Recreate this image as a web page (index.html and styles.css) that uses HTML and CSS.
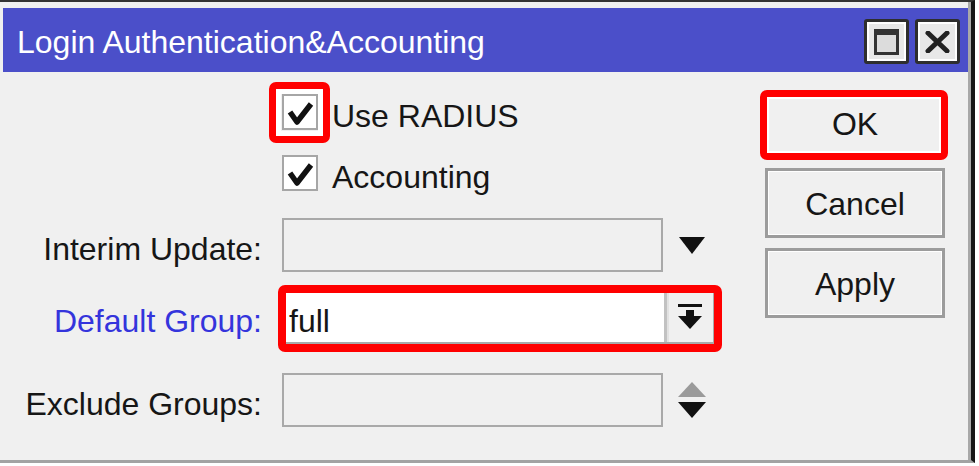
FILE: index.html
```html
<!DOCTYPE html>
<html>
<head>
<meta charset="utf-8">
<title>Login Authentication&amp;Accounting</title>
<link rel="stylesheet" href="styles.css">
</head>
<body>
<div class="window">
  <div class="titlebar">
    <span class="title">Login Authentication&amp;Accounting</span>
    <div class="tb-btns">
      <div class="tb-btn">
        <svg width="25" height="26" viewBox="0 0 25 26"><rect x="1.5" y="1.5" width="22" height="23" fill="#dcdcdc" stroke="#333" stroke-width="3"/><rect x="0" y="0" width="25" height="6" fill="#333"/></svg>
      </div>
      <div class="tb-btn">
        <svg width="25" height="22" viewBox="0 0 25 22"><path d="M3 2 L22 20 M22 2 L3 20" stroke="#222" stroke-width="5" stroke-linecap="round"/></svg>
      </div>
    </div>
  </div>
  <div class="content">
    <div class="form">
      <div class="row check-row">
        <span class="label"></span>
        <span class="checkbox hl hl-check">
          <svg width="32" height="32" viewBox="0 0 32 32"><polyline points="6,16 13,26 27,8" fill="none" stroke="#111" stroke-width="5.5" stroke-linejoin="round"/></svg>
        </span>
        <span class="cb-text">Use RADIUS</span>
      </div>
      <div class="row check-row row2">
        <span class="label"></span>
        <span class="checkbox">
          <svg width="32" height="32" viewBox="0 0 32 32"><polyline points="6,16 13,26 27,8" fill="none" stroke="#111" stroke-width="5.5" stroke-linejoin="round"/></svg>
        </span>
        <span class="cb-text">Accounting</span>
      </div>
      <div class="row field-row row3">
        <span class="label">Interim Update:</span>
        <span class="field"></span>
        <span class="arrow">
          <svg width="30" height="17" viewBox="0 0 30 17"><polygon points="2,0 28,0 15,17" fill="#111"/></svg>
        </span>
      </div>
      <div class="row field-row row4">
        <span class="label label-blue">Default Group:</span>
        <span class="combo hl hl-combo">
          <span class="combo-value">full</span>
          <span class="combo-btn">
            <svg width="24" height="26" viewBox="0 0 24 26"><rect x="0" y="0" width="24" height="3" fill="#111"/><rect x="8" y="6" width="8" height="7" fill="#111"/><polygon points="0,12 24,12 12,25" fill="#111"/></svg>
          </span>
        </span>
      </div>
      <div class="row field-row row5">
        <span class="label">Exclude Groups:</span>
        <span class="field"></span>
        <span class="arrow">
          <svg width="30" height="36" viewBox="0 0 30 36"><polygon points="15,0 29,15 1,15" fill="#9a9a9a"/><polygon points="1,20 29,20 15,36" fill="#111"/></svg>
        </span>
      </div>
    </div>
    <div class="actions">
      <div class="btn btn-ok hl hl-ok">OK</div>
      <div class="btn">Cancel</div>
      <div class="btn">Apply</div>
    </div>
  </div>
</div>
</body>
</html>
```

FILE: styles.css
```css
html, body {
  margin: 0;
  padding: 0;
  background: #ffffff;
}

body {
  font-family: "Liberation Sans", Arial, sans-serif;
  font-size: 32px;
  color: #161616;
}

.window {
  box-sizing: border-box;
  width: 975px;
  height: 463px;
  background: #f0f0f0;
  border-top: 2px solid #333333;
  border-right: 4px solid #151515;
  border-bottom: 3px solid #a3a3a3;
  box-shadow: inset -3px 0 0 #a8a8a8;
  padding: 6px 3px 0 3px;
  display: flex;
  flex-direction: column;
}

.titlebar {
  height: 64px;
  background: #4b4fc9;
  display: flex;
  align-items: center;
  justify-content: space-between;
  padding: 0 8px 0 14px;
}

.title {
  color: #ffffff;
  font-size: 32px;
  line-height: 1;
  padding-top: 3px;
}

.tb-btns {
  display: flex;
  gap: 6px;
  padding-top: 3px;
}

.tb-btn {
  box-sizing: border-box;
  width: 45px;
  height: 45px;
  border: 3px solid #2e2e2e;
  border-radius: 3px;
  background: #e8e8e8;
  box-shadow: inset 0 0 0 2px #ffffff;
  display: flex;
  align-items: center;
  justify-content: center;
}

.content {
  flex: 1;
  display: flex;
}

.form {
  flex: 1;
  display: flex;
  flex-direction: column;
  padding-top: 22px;
}

.row {
  display: flex;
  align-items: center;
}

.check-row {
  height: 36px;
}

.field-row {
  height: 54px;
}

.row2 { margin-top: 25px; }
.row3 { margin-top: 27px; }
.row4 { margin-top: 18px; }
.row5 { margin-top: 29px; }

.label {
  flex: none;
  width: 259px;
  margin-right: 20px;
  text-align: right;
  white-space: nowrap;
  padding-top: 9px;
}

.label-blue {
  color: #3434dc;
}

.checkbox {
  box-sizing: border-box;
  width: 36px;
  height: 36px;
  border: 2px solid #a6a6a6;
  background: #ffffff;
  display: flex;
  align-items: center;
  justify-content: center;
}

.cb-text {
  margin-left: 14px;
  padding-top: 9px;
  white-space: nowrap;
}

.field {
  box-sizing: border-box;
  width: 381px;
  height: 54px;
  border: 2px solid #a9a9a9;
  background: #f0f0f0;
}

.arrow {
  margin-left: 14px;
  display: flex;
}

.combo {
  box-sizing: border-box;
  width: 433px;
  height: 54px;
  border: 2px solid #a9a9a9;
  display: flex;
}

.combo-value {
  flex: 1;
  background: #ffffff;
  padding: 9px 0 0 5px;
  display: flex;
  align-items: center;
}

.combo-btn {
  width: 46px;
  background: #f0f0f0;
  border-left: 3px solid #c2c2c2;
  box-shadow: inset 2px 0 0 #e2e2e2;
  display: flex;
  align-items: center;
  justify-content: center;
}

.actions {
  flex: none;
  width: 180px;
  margin-right: 23px;
  padding-top: 16px;
  display: flex;
  flex-direction: column;
  gap: 10px;
}

.btn {
  box-sizing: border-box;
  height: 70px;
  border: 3px solid #9c9c9c;
  background: #f0f0f0;
  box-shadow: inset 0 0 0 1px #ffffff;
  display: flex;
  align-items: center;
  justify-content: center;
  padding-top: 2px;
}

.btn-ok {
  border-color: transparent;
}

.hl {
  position: relative;
}

.hl::after {
  content: "";
  position: absolute;
  border: 7px solid #ff0000;
  border-radius: 7px;
  pointer-events: none;
}

.hl-check::after {
  top: -14px;
  right: -14px;
  bottom: -15px;
  left: -15px;
  box-shadow: inset 0 0 0 5px #ffffff;
}

.hl-combo::after {
  top: -7px;
  right: -9px;
  bottom: -10px;
  left: -6px;
  border-width: 8px;
}

.hl-ok::after {
  top: -1px;
  right: -6px;
  bottom: -5px;
  left: -8px;
  box-shadow: inset 0 0 0 2px #ffffff;
}
```
